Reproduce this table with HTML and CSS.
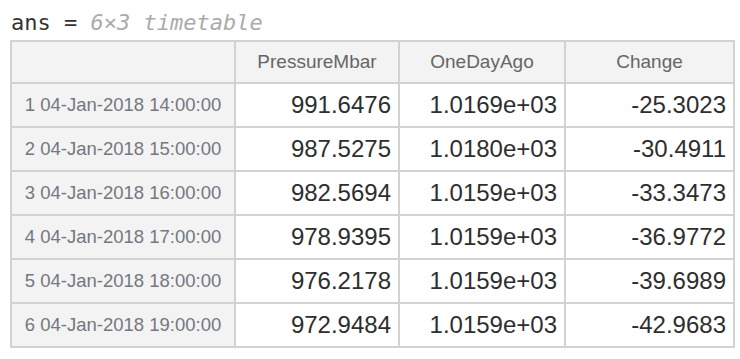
FILE: index.html
```html
<!DOCTYPE html>
<html>
<head>
<meta charset="utf-8">
<link rel="stylesheet" href="styles.css">
</head>
<body>
<div class="out">
  <div class="title"><span class="var">ans</span> = <span class="desc">6×3 timetable</span></div>
  <div class="tt">
    <div class="cell hd idx"></div>
    <div class="cell hd">PressureMbar</div>
    <div class="cell hd">OneDayAgo</div>
    <div class="cell hd">Change</div>

    <div class="cell idx">1 04-Jan-2018 14:00:00</div>
    <div class="cell num">991.6476</div>
    <div class="cell num">1.0169e+03</div>
    <div class="cell num">-25.3023</div>

    <div class="cell idx">2 04-Jan-2018 15:00:00</div>
    <div class="cell num">987.5275</div>
    <div class="cell num">1.0180e+03</div>
    <div class="cell num">-30.4911</div>

    <div class="cell idx">3 04-Jan-2018 16:00:00</div>
    <div class="cell num">982.5694</div>
    <div class="cell num">1.0159e+03</div>
    <div class="cell num">-33.3473</div>

    <div class="cell idx">4 04-Jan-2018 17:00:00</div>
    <div class="cell num">978.9395</div>
    <div class="cell num">1.0159e+03</div>
    <div class="cell num">-36.9772</div>

    <div class="cell idx">5 04-Jan-2018 18:00:00</div>
    <div class="cell num">976.2178</div>
    <div class="cell num">1.0159e+03</div>
    <div class="cell num">-39.6989</div>

    <div class="cell idx">6 04-Jan-2018 19:00:00</div>
    <div class="cell num">972.9484</div>
    <div class="cell num">1.0159e+03</div>
    <div class="cell num">-42.9683</div>
  </div>
</div>
</body>
</html>
```
FILE: styles.css
```css
html, body {
  margin: 0;
  padding: 0;
  background: #ffffff;
}
.out {
  padding: 10px 0 0 10px;
}
.title {
  font-family: "DejaVu Sans Mono", monospace;
  font-size: 22px;
  line-height: 26px;
  height: 26px;
  color: #333333;
  padding-left: 1px;
  margin-bottom: 4px;
  white-space: pre;
}
.title .desc {
  color: #ababab;
  font-style: italic;
}
.tt {
  display: grid;
  grid-template-columns: 224px 164px 166px 169px;
  grid-template-rows: 42px repeat(6, 44px);
  width: max-content;
  border-top: 2px solid #d2d2d2;
  border-left: 2px solid #d2d2d2;
  font-family: "Liberation Sans", Arial, sans-serif;
}
.cell {
  box-sizing: border-box;
  border-right: 2px solid #d2d2d2;
  border-bottom: 2px solid #d2d2d2;
  display: flex;
  align-items: center;
  white-space: nowrap;
}
.hd {
  background: #f3f3f3;
  justify-content: center;
  color: #666666;
  font-size: 19px;
}
.idx {
  background: #f3f3f3;
  justify-content: center;
  color: #737880;
  font-size: 18.5px;
}
.num {
  background: #ffffff;
  justify-content: flex-end;
  padding-right: 7px;
  color: #2e2e2e;
  font-size: 24px;
}
```
